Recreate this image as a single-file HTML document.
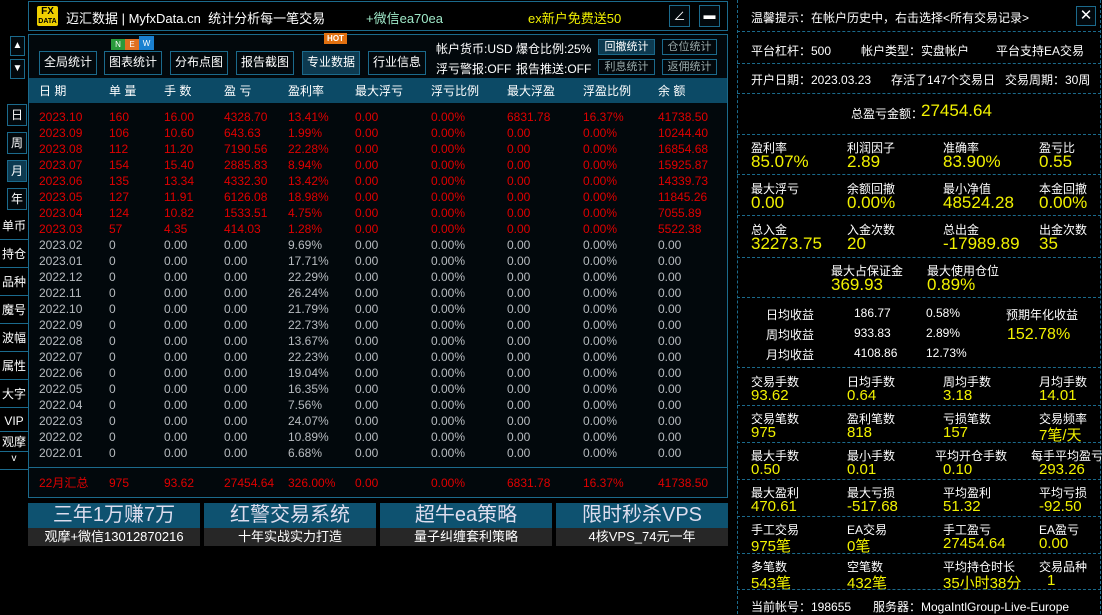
<!DOCTYPE html>
<html><head><meta charset="utf-8"><style>
*{margin:0;padding:0;box-sizing:border-box}
body{width:1102px;height:614px;background:#000;overflow:hidden;position:relative;font-family:"Liberation Sans","Noto Sans CJK SC",sans-serif;color:#fff;font-size:12px}
.a{position:absolute;white-space:nowrap}
.box{position:absolute;border:1px solid #1b6a8c}
.btn{position:absolute;border:1px solid #1b6a8c;color:#fff;font-size:12px;text-align:center;line-height:21px;background:#02080c}
.sb{position:absolute;border:1px solid #1b6a8c;color:#9aa;font-size:11px;text-align:center;line-height:14px}
.side{position:absolute;left:0;width:28px;color:#fff;font-size:12px;text-align:center;border-bottom:1px solid #1b6a8c;height:26px;line-height:24px}
.row{position:absolute;left:39px;width:680px;font-size:12px;height:16px;line-height:16px}
.row span{position:absolute;top:0;white-space:nowrap}
.r{color:#e00000}.g{color:#b8bcc0}
.dl{position:absolute;left:737px;width:364px;border-top:1px dashed #1b6a8c}
.lb{position:absolute;font-size:12px;color:#fff;white-space:nowrap}
.vl{position:absolute;font-size:16px;color:#f2f200;white-space:nowrap}
.ban{position:absolute;top:503px;width:172px;height:43px}
.ban .t{height:25px;background:#0e5270;color:#dde;font-size:20px;text-align:center;line-height:25px}
.ban .b{height:18px;background:#272727;color:#fff;font-size:13px;text-align:center;line-height:18px}
</style></head><body>
<div class="box" style="left:28px;top:1px;width:700px;height:30px"></div>
<div class="a" style="left:37px;top:6px;width:21px;height:20px;background:#f0d000;border-radius:2px;color:#000;font-weight:bold;font-size:10px;line-height:9px;text-align:center;padding-top:1px">FX<br><span style="font-size:7px">DATA</span></div>
<div class="a" style="left:66px;top:8px;font-size:13px">迈汇数据 | MyfxData.cn&nbsp; 统计分析每一笔交易</div>
<div class="a" style="left:366px;top:8px;font-size:13px;color:#9fe8c8">+微信ea70ea</div>
<div class="a" style="left:528px;top:8px;font-size:13px;color:#f0f000">ex新户免费送50</div>
<div class="btn" style="left:669px;top:5px;width:21px;height:22px;line-height:20px">∠</div>
<div class="btn" style="left:699px;top:5px;width:21px;height:22px;line-height:18px;font-weight:bold">▬</div>
<div class="btn" style="left:10px;top:36px;width:15px;height:20px;line-height:18px;font-size:10px">▲</div>
<div class="btn" style="left:10px;top:59px;width:15px;height:20px;line-height:18px;font-size:10px">▼</div>
<div class="box" style="left:28px;top:34px;width:700px;height:464px;background:#02080c"></div>
<div class="btn" style="left:39px;top:51px;width:58px;height:24px">全局统计</div>
<div class="btn" style="left:104px;top:51px;width:58px;height:24px">图表统计</div>
<div class="a" style="left:111px;top:39px;width:14px;height:11px;background:#2a9a3a;font-size:8px;text-align:center;line-height:11px">N</div>
<div class="a" style="left:125px;top:39px;width:14px;height:11px;background:#e07020;font-size:8px;text-align:center;line-height:11px">E</div>
<div class="a" style="left:139px;top:36px;width:15px;height:14px;background:#1a80d0;font-size:8px;text-align:center;line-height:16px">W</div>
<div class="btn" style="left:170px;top:51px;width:58px;height:24px">分布点图</div>
<div class="btn" style="left:236px;top:51px;width:58px;height:24px">报告截图</div>
<div class="btn" style="left:302px;top:51px;width:58px;height:24px;background:#0d3a50">专业数据</div>
<div class="a" style="left:324px;top:33px;width:23px;height:11px;background:#e07010;font-size:8px;text-align:center;line-height:11px;font-weight:bold">HOT</div>
<div class="btn" style="left:368px;top:51px;width:58px;height:24px">行业信息</div>
<div class="a" style="left:436px;top:40px;font-size:12px">帐户货币:USD</div>
<div class="a" style="left:516px;top:40px;font-size:12px">爆仓比例:25%</div>
<div class="a" style="left:436px;top:60px;font-size:12px">浮亏警报:OFF</div>
<div class="a" style="left:516px;top:60px;font-size:12px">报告推送:OFF</div>
<div class="sb" style="left:598px;top:39px;width:57px;height:16px;color:#fff;background:#0d3a50">回撤统计</div>
<div class="sb" style="left:662px;top:39px;width:55px;height:16px">仓位统计</div>
<div class="sb" style="left:598px;top:59px;width:57px;height:16px">利息统计</div>
<div class="sb" style="left:662px;top:59px;width:55px;height:16px">返佣统计</div>
<div class="a" style="left:29px;top:78px;width:698px;height:25px;background:#0c4a66"></div>
<div class="row" style="top:83px;color:#fff"><span style="left:0">日 期</span><span style="left:70px">单 量</span><span style="left:125px">手 数</span><span style="left:185px">盈 亏</span><span style="left:249px">盈利率</span><span style="left:316px">最大浮亏</span><span style="left:392px">浮亏比例</span><span style="left:468px">最大浮盈</span><span style="left:544px">浮盈比例</span><span style="left:619px">余 额</span></div>
<div id="rows"></div>
<div class="a" style="left:29px;top:467px;width:698px;border-top:1px solid #1b6a8c"></div>
<div class="row r" style="top:475px"><span style="left:0">22月汇总</span><span style="left:70px">975</span><span style="left:125px">93.62</span><span style="left:185px">27454.64</span><span style="left:249px">326.00%</span><span style="left:316px">0.00</span><span style="left:392px">0.00%</span><span style="left:468px">6831.78</span><span style="left:544px">16.37%</span><span style="left:619px">41738.50</span></div>
<div class="btn" style="left:7px;top:104px;width:20px;height:22px">日</div>
<div class="btn" style="left:7px;top:132px;width:20px;height:22px">周</div>
<div class="btn" style="left:7px;top:160px;width:20px;height:22px;background:#0d3a50">月</div>
<div class="btn" style="left:7px;top:188px;width:20px;height:22px">年</div>
<div class="side" style="top:214px">单币</div>
<div class="side" style="top:242px">持仓</div>
<div class="side" style="top:270px">品种</div>
<div class="side" style="top:298px">魔号</div>
<div class="side" style="top:326px">波幅</div>
<div class="side" style="top:354px">属性</div>
<div class="side" style="top:382px">大字</div>
<div class="side" style="top:410px;height:22px;line-height:22px">VIP</div>
<div class="side" style="top:432px;height:20px;line-height:20px">观摩</div>
<div class="side" style="top:452px;height:18px;line-height:14px;font-size:10px">v</div>
<div class="ban" style="left:28px"><div class="t">三年1万赚7万</div><div class="b">观摩+微信13012870216</div></div>
<div class="ban" style="left:204px"><div class="t">红警交易系统</div><div class="b">十年实战实力打造</div></div>
<div class="ban" style="left:380px"><div class="t">超牛ea策略</div><div class="b">量子纠缠套利策略</div></div>
<div class="ban" style="left:556px"><div class="t">限时秒杀VPS</div><div class="b">4核VPS_74元一年</div></div>
<div class="a" style="left:737px;top:0;height:614px;border-left:1px dashed #1b6a8c"></div>
<div class="a" style="left:1100px;top:0;height:614px;border-left:1px dashed #1b6a8c"></div>
<div class="lb" style="left:751px;top:9px">温馨提示：在帐户历史中，右击选择&lt;所有交易记录&gt;</div>
<div class="btn" style="left:1076px;top:6px;width:20px;height:20px;line-height:18px;font-size:15px">✕</div>
<div class="dl" style="top:31px"></div>
<div class="lb" style="left:751px;top:42px">平台杠杆：500</div><div class="lb" style="left:861px;top:42px">帐户类型：实盘帐户</div><div class="lb" style="left:996px;top:42px">平台支持EA交易</div>
<div class="dl" style="top:63px"></div>
<div class="lb" style="left:751px;top:71px">开户日期：2023.03.23</div><div class="lb" style="left:891px;top:71px">存活了147个交易日</div><div class="lb" style="left:1005px;top:71px">交易周期：30周</div>
<div class="dl" style="top:93px"></div>
<div class="lb" style="left:851px;top:105px">总盈亏金额：</div><div class="vl" style="left:921px;top:101px;font-size:17px">27454.64</div>
<div class="dl" style="top:134px"></div>
<div id="rp"></div>
<div class="lb" style="left:766px;top:306px">日均收益</div><div class="lb" style="left:854px;top:306px">186.77</div><div class="lb" style="left:926px;top:306px">0.58%</div>
<div class="lb" style="left:766px;top:326px">周均收益</div><div class="lb" style="left:854px;top:326px">933.83</div><div class="lb" style="left:926px;top:326px">2.89%</div>
<div class="lb" style="left:766px;top:346px">月均收益</div><div class="lb" style="left:854px;top:346px">4108.86</div><div class="lb" style="left:926px;top:346px">12.73%</div>
<div class="lb" style="left:1006px;top:306px">预期年化收益</div><div class="vl" style="left:1007px;top:326px;font-size:16px">152.78%</div>
<div class="lb" style="left:751px;top:598px">当前帐号：198655</div><div class="lb" style="left:873px;top:598px">服务器：MogaIntlGroup-Live-Europe</div>
<script>
var R=[["2023.10","160","16.00","4328.70","13.41%","0.00","0.00%","6831.78","16.37%","41738.50"],["2023.09","106","10.60","643.63","1.99%","0.00","0.00%","0.00","0.00%","10244.40"],["2023.08","112","11.20","7190.56","22.28%","0.00","0.00%","0.00","0.00%","16854.68"],["2023.07","154","15.40","2885.83","8.94%","0.00","0.00%","0.00","0.00%","15925.87"],["2023.06","135","13.34","4332.30","13.42%","0.00","0.00%","0.00","0.00%","14339.73"],["2023.05","127","11.91","6126.08","18.98%","0.00","0.00%","0.00","0.00%","11845.26"],["2023.04","124","10.82","1533.51","4.75%","0.00","0.00%","0.00","0.00%","7055.89"],["2023.03","57","4.35","414.03","1.28%","0.00","0.00%","0.00","0.00%","5522.38"]];
var g=[["2023.02","9.69%"],["2023.01","17.71%"],["2022.12","22.29%"],["2022.11","26.24%"],["2022.10","21.79%"],["2022.09","22.73%"],["2022.08","13.67%"],["2022.07","22.23%"],["2022.06","19.04%"],["2022.05","16.35%"],["2022.04","7.56%"],["2022.03","24.07%"],["2022.02","10.89%"],["2022.01","6.68%"]];
g.forEach(function(x){R.push([x[0],"0","0.00","0.00",x[1],"0.00","0.00%","0.00","0.00%","0.00"])});
var L=[0,70,125,185,249,316,392,468,544,619],h="";
R.forEach(function(r,i){h+='<div class="row '+(i<8?'r':'g')+'" style="top:'+(109+i*16)+'px">';r.forEach(function(c,j){h+='<span style="left:'+L[j]+'px">'+c+'</span>'});h+='</div>'});
document.getElementById('rows').innerHTML=h;
var X=[751,847,943,1039],S=[
[139,[["盈利率","85.07%"],["利润因子","2.89"],["准确率","83.90%"],["盈亏比","0.55"]],174],
[180,[["最大浮亏","0.00"],["余额回撤","0.00%"],["最小净值","48524.28"],["本金回撤","0.00%"]],215],
[221,[["总入金","32273.75"],["入金次数","20"],["总出金","-17989.89"],["出金次数","35"]],257],
[262,[null,["最大占保证金","369.93"],["最大使用仓位","0.89%"],null],297],
[373,[["交易手数","93.62"],["日均手数","0.64"],["周均手数","3.18"],["月均手数","14.01"]],405],
[410,[["交易笔数","975"],["盈利笔数","818"],["亏损笔数","157"],["交易频率","7笔/天"]],442],
[447,[["最大手数","0.50"],["最小手数","0.01"],["平均开仓手数","0.10"],["每手平均盈亏","293.26"]],479],
[484,[["最大盈利","470.61"],["最大亏损","-517.68"],["平均盈利","51.32"],["平均亏损","-92.50"]],516],
[521,[["手工交易","975笔"],["EA交易","0笔"],["手工盈亏","27454.64"],["EA盈亏","0.00"]],553],
[558,[["多笔数","543笔"],["空笔数","432笔"],["平均持仓时长","35小时38分"],["交易品种","1"]],589]];
var s="",big=[139,180,221,262];
S.forEach(function(q){var b=big.indexOf(q[0])>=0;q[1].forEach(function(c,j){if(!c)return;var x=X[j];if(q[0]==262)x=X[j]-16;if(q[0]==447&&j==2)x=935;if(q[0]==447&&j==3)x=1031;var vx=x;if(q[0]==447&&j>=2)vx=X[j];if(q[0]==558&&j==3)vx=1047;
s+='<div class="lb" style="left:'+x+'px;top:'+q[0]+'px">'+c[0]+'</div><div class="vl" style="left:'+vx+'px;top:'+(q[0]+(b?13:14))+'px;font-size:'+(b?17:15)+'px">'+c[1]+'</div>'});
s+='<div class="dl" style="top:'+q[2]+'px"></div>'});
s+='<div class="dl" style="top:367px"></div>';
document.getElementById('rp').innerHTML=s;
</script>
</body></html>
